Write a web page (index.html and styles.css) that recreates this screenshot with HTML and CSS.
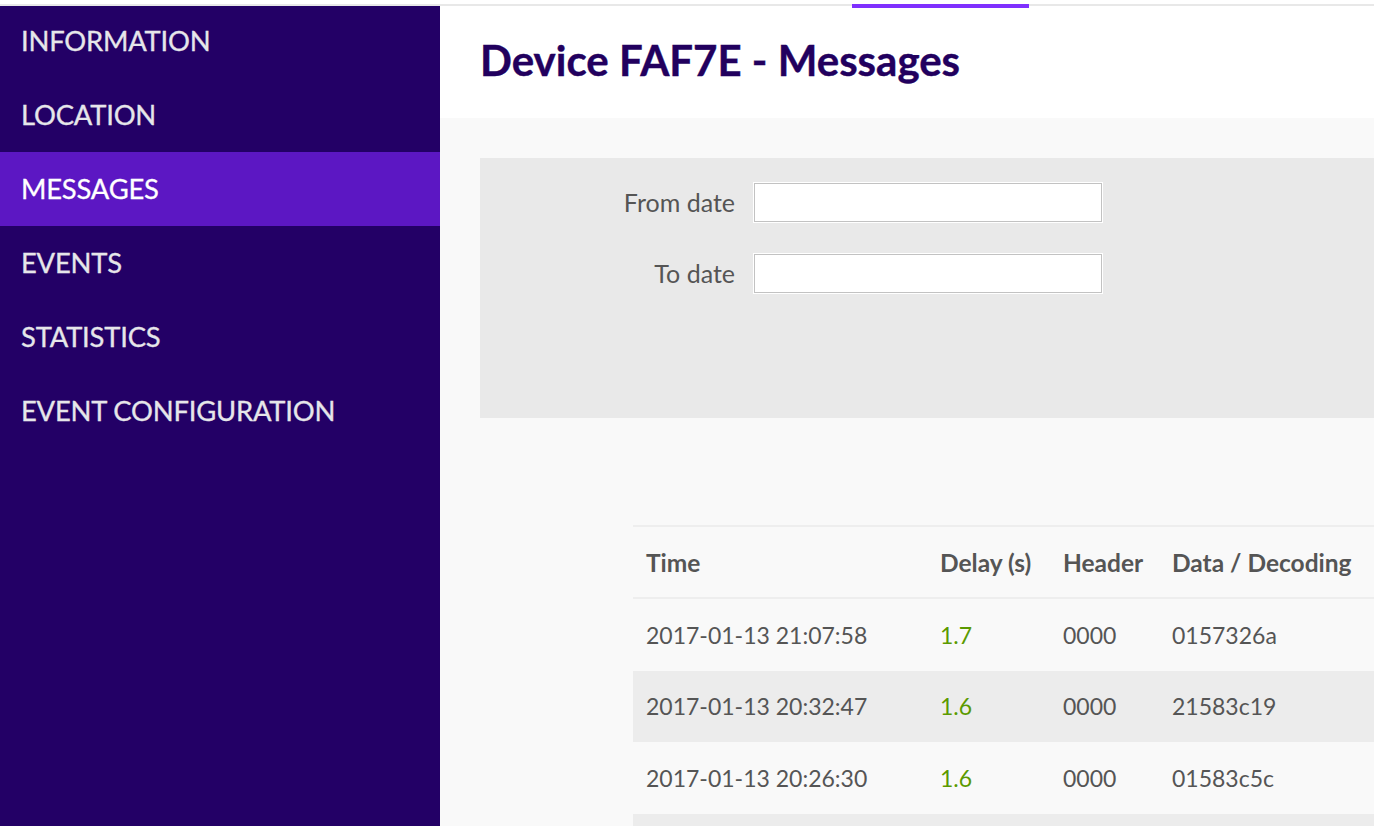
FILE: index.html
```html
<!DOCTYPE html>
<html>
<head>
<meta charset="utf-8">
<link rel="stylesheet" href="styles.css">
</head>
<body>
<div class="progress"><div class="progress-bar"></div></div>
<div class="layout">
  <nav class="sidebar">
    <a class="nav-item">INFORMATION</a>
    <a class="nav-item">LOCATION</a>
    <a class="nav-item active">MESSAGES</a>
    <a class="nav-item">EVENTS</a>
    <a class="nav-item">STATISTICS</a>
    <a class="nav-item">EVENT CONFIGURATION</a>
  </nav>
  <main class="main">
    <header class="page-header">
      <h1 class="title">Device FAF7E - Messages</h1>
    </header>
    <section class="content">
      <form class="filter">
        <div class="field">
          <label class="field-label">From date</label>
          <input class="field-input" type="text">
        </div>
        <div class="field">
          <label class="field-label">To date</label>
          <input class="field-input" type="text">
        </div>
      </form>
      <table class="messages">
        <thead>
          <tr>
            <th class="col-time">Time</th>
            <th class="col-delay">Delay (s)</th>
            <th class="col-header">Header</th>
            <th class="col-data">Data / Decoding</th>
          </tr>
        </thead>
        <tbody>
          <tr>
            <td>2017-01-13 21:07:58</td>
            <td class="delay">1.7</td>
            <td>0000</td>
            <td>0157326a</td>
          </tr>
          <tr class="alt">
            <td>2017-01-13 20:32:47</td>
            <td class="delay">1.6</td>
            <td>0000</td>
            <td>21583c19</td>
          </tr>
          <tr>
            <td>2017-01-13 20:26:30</td>
            <td class="delay">1.6</td>
            <td>0000</td>
            <td>01583c5c</td>
          </tr>
          <tr class="alt">
            <td></td>
            <td class="delay"></td>
            <td></td>
            <td></td>
          </tr>
        </tbody>
      </table>
    </section>
  </main>
</div>
</body>
</html>
```
FILE: styles.css
```css
html, body {
  margin: 0;
  padding: 0;
}
body {
  font-family: "Lato", "Noto Sans", sans-serif;
  background: #ffffff;
  padding-top: 4px;
  overflow: hidden;
  height: 826px;
  box-sizing: border-box;
}
.progress {
  position: absolute;
  top: 4px;
  left: 0;
  right: 0;
  height: 2px;
  background: #e8e8e8;
  z-index: 5;
}
.progress-bar {
  position: absolute;
  left: 852px;
  top: 0;
  width: 177px;
  height: 4px;
  background: #7f2ffe;
}
.layout {
  display: flex;
  height: 822px;
  width: 1560px;
  overflow: hidden;
}
.sidebar {
  width: 440px;
  flex: 0 0 440px;
  background: #230066;
  display: flex;
  flex-direction: column;
}
.nav-item {
  height: 74px;
  flex-shrink: 0;
  display: flex;
  align-items: center;
  padding-left: 21px;
  padding-bottom: 1px;
  box-sizing: border-box;
  font-size: 27.4px;
  color: #e6e6ea;
  letter-spacing: -0.2px;
  -webkit-text-stroke: 0.3px #e6e6ea;
}
.nav-item.active {
  background: #5c17c3;
  color: #ffffff;
  -webkit-text-stroke: 0.3px #ffffff;
}
.main {
  flex: 1;
  display: flex;
  flex-direction: column;
  background: #f9f9f9;
}
.page-header {
  background: #ffffff;
  height: 114px;
  flex-shrink: 0;
  display: flex;
  align-items: center;
  padding-left: 40px;
}
.title {
  margin: 0;
  font-size: 42px;
  font-weight: 700;
  color: #22005e;
  padding-bottom: 2px;
  -webkit-text-stroke: 0.4px #22005e;
}
.content {
  padding: 40px 40px 0 40px;
}
.filter {
  background: #e9e9e9;
  height: 260px;
  box-sizing: border-box;
  padding-top: 25px;
  display: flex;
  flex-direction: column;
  gap: 32px;
  margin: 0;
}
.field {
  display: flex;
  align-items: center;
}
.field-label {
  width: 255px;
  text-align: right;
  font-size: 25px;
  color: #555555;
  margin-right: 19px;
  padding-bottom: 2px;
}
.field-input {
  width: 348px;
  height: 39px;
  box-sizing: border-box;
  border: 1px solid #c2c2c2;
  box-shadow: 0 0 0 1px #ffffff;
  background: #ffffff;
  margin: 0;
  padding: 0 8px;
}
.messages {
  margin-top: 107px;
  margin-left: 153px;
  border-collapse: collapse;
  font-size: 23px;
  color: #555555;
  width: 900px;
}
.messages thead tr {
  border-top: 2px solid #eeeeee;
  border-bottom: 2px solid #eeeeee;
}
.messages th {
  text-align: left;
  font-weight: 700;
  font-size: 24.5px;
  height: 70px;
  padding: 0 13px;
  white-space: nowrap;
}
.messages td {
  height: 71.5px;
  padding: 0 13px;
  white-space: nowrap;
}
.col-time { width: 268px; }
.col-delay { width: 97px; }
.col-header { width: 83px; }
.messages tr.alt {
  background: #ececec;
}
.delay {
  color: #5b9a00;
}
```
